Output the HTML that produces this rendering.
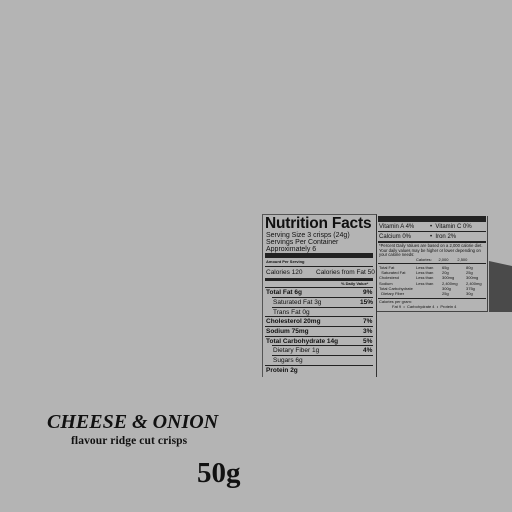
<!DOCTYPE html>
<html><head><style>
html,body{margin:0;padding:0;}
body{width:512px;height:512px;background:#b4b4b4;position:relative;overflow:hidden;font-family:"Liberation Sans",sans-serif;color:#111;}
.a{position:absolute;white-space:nowrap;line-height:1;}
.l{position:absolute;background:#222;}
</style></head><body>
<div style="position:absolute;left:262px;top:214px;width:113px;height:162px;border-right:1px solid #333;border-left:1px solid #555;border-top:1px solid #555;"></div>
<div class="a" style="left:265px;top:216px;font-size:15.5px;font-weight:bold;letter-spacing:-0.2px">Nutrition Facts</div>
<div class="a" style="left:266px;top:232px;font-size:7px">Serving Size 3 crisps (24g)</div>
<div class="a" style="left:266px;top:239px;font-size:7px">Servings Per Container</div>
<div class="a" style="left:266px;top:246px;font-size:7px">Approximately 6</div>
<div class="l" style="left:265px;top:253px;width:108px;height:5px"></div>
<div class="a" style="left:266px;top:260px;font-size:4px;font-weight:bold">Amount Per Serving</div>
<div class="l" style="left:265px;top:266px;width:108px;height:1px"></div>
<div class="a" style="left:266px;top:270px;font-size:6.5px">Calories 120</div>
<div class="a" style="left:316px;top:270px;font-size:6.5px">Calories from Fat 50</div>
<div class="l" style="left:265px;top:278px;width:108px;height:3px"></div>
<div class="a" style="left:341px;top:282px;font-size:4px;font-weight:bold">% Daily Value*</div>
<div class="l" style="left:265px;top:287px;width:108px;height:1px"></div>
<div class="a" style="left:266px;top:290px;font-size:6.5px;font-weight:bold">Total Fat 6g</div><div class="a" style="left:363px;top:290px;font-size:6.5px;font-weight:bold">9%</div>
<div class="l" style="left:272px;top:297px;width:101px;height:1px"></div>
<div class="a" style="left:273px;top:300px;font-size:6.5px">Saturated Fat 3g</div><div class="a" style="left:360px;top:300px;font-size:6.5px;font-weight:bold">15%</div>
<div class="l" style="left:272px;top:307px;width:101px;height:1px"></div>
<div class="a" style="left:273px;top:310px;font-size:6.5px">Trans Fat 0g</div>
<div class="l" style="left:265px;top:316px;width:108px;height:1px"></div>
<div class="a" style="left:266px;top:319px;font-size:6.5px;font-weight:bold">Cholesterol 20mg</div><div class="a" style="left:363px;top:319px;font-size:6.5px;font-weight:bold">7%</div>
<div class="l" style="left:265px;top:326px;width:108px;height:1px"></div>
<div class="a" style="left:266px;top:329px;font-size:6.5px;font-weight:bold">Sodium 75mg</div><div class="a" style="left:363px;top:329px;font-size:6.5px;font-weight:bold">3%</div>
<div class="l" style="left:265px;top:336px;width:108px;height:1px"></div>
<div class="a" style="left:266px;top:339px;font-size:6.5px;font-weight:bold">Total Carbohydrate 14g</div><div class="a" style="left:363px;top:339px;font-size:6.5px;font-weight:bold">5%</div>
<div class="l" style="left:272px;top:345px;width:101px;height:1px"></div>
<div class="a" style="left:273px;top:348px;font-size:6.5px">Dietary Fiber 1g</div><div class="a" style="left:363px;top:348px;font-size:6.5px;font-weight:bold">4%</div>
<div class="l" style="left:272px;top:355px;width:101px;height:1px"></div>
<div class="a" style="left:273px;top:358px;font-size:6.5px">Sugars 6g</div>
<div class="l" style="left:265px;top:365px;width:108px;height:1px"></div>
<div class="a" style="left:266px;top:368px;font-size:6.5px;font-weight:bold">Protein 2g</div>
<div style="position:absolute;left:377px;top:216px;width:110px;height:95px;border-right:1px solid #444;border-bottom:1px solid #444;"></div>
<div class="l" style="left:378px;top:216px;width:108px;height:6px"></div>
<div class="a" style="left:379px;top:224px;font-size:6px">Vitamin A 4%</div><div class="a" style="left:430px;top:224px;font-size:6px">•&nbsp; Vitamin C 0%</div>
<div class="l" style="left:378px;top:231px;width:108px;height:1px"></div>
<div class="a" style="left:379px;top:234px;font-size:6px">Calcium 0%</div><div class="a" style="left:430px;top:234px;font-size:6px">•&nbsp; Iron 2%</div>
<div class="l" style="left:378px;top:241px;width:108px;height:2px"></div>
<div class="a" style="left:379px;top:244px;font-size:4.2px;line-height:4.6px;white-space:normal;width:108px">*Percent Daily Values are based on a 2,000 calorie diet. Your daily values may be higher or lower depending on your calorie needs:</div>
<div class="a" style="left:416px;top:258px;font-size:4px">Calories:&nbsp;&nbsp;&nbsp;&nbsp;&nbsp; 2,000&nbsp;&nbsp;&nbsp;&nbsp;&nbsp;&nbsp;&nbsp; 2,500</div>
<div class="l" style="left:378px;top:263px;width:108px;height:1px"></div>
<div class="a" style="left:379px;top:265px;font-size:4px;line-height:5.2px">Total Fat<br>&nbsp;&nbsp;Saturated Fat<br>Cholesterol<br>Sodium<br>Total Carbohydrate<br>&nbsp;&nbsp;Dietary Fiber</div>
<div class="a" style="left:416px;top:265px;font-size:4px;line-height:5.2px">Less than<br>Less than<br>Less than<br>Less than</div>
<div class="a" style="left:442px;top:265px;font-size:4px;line-height:5.2px">65g<br>20g<br>300mg<br>2,400mg<br>300g<br>25g</div>
<div class="a" style="left:466px;top:265px;font-size:4px;line-height:5.2px">80g<br>25g<br>300mg<br>2,400mg<br>375g<br>30g</div>
<div class="l" style="left:378px;top:298px;width:108px;height:1px"></div>
<div class="a" style="left:379px;top:300px;font-size:4px">Calories per gram:</div>
<div class="a" style="left:392px;top:305px;font-size:4px">Fat 9&nbsp; •&nbsp; Carbohydrate 4&nbsp; •&nbsp; Protein 4</div>
<svg style="position:absolute;left:0;top:0" width="512" height="512"><polygon points="489,261 512,266 512,312 489,312" fill="#4a4a4a"/></svg>
<div class="a" style="left:47px;top:412px;font-family:'Liberation Serif',serif;font-style:italic;font-weight:bold;font-size:20px;letter-spacing:0px;color:#111">CHEESE &amp; ONION</div>
<div class="a" style="left:71px;top:436px;font-family:'Liberation Serif',serif;font-weight:bold;font-size:11.5px;letter-spacing:0.1px">flavour ridge cut crisps</div>
<div class="a" style="left:197px;top:459px;font-family:'Liberation Serif',serif;font-weight:bold;font-size:29px">50g</div>
</body></html>
